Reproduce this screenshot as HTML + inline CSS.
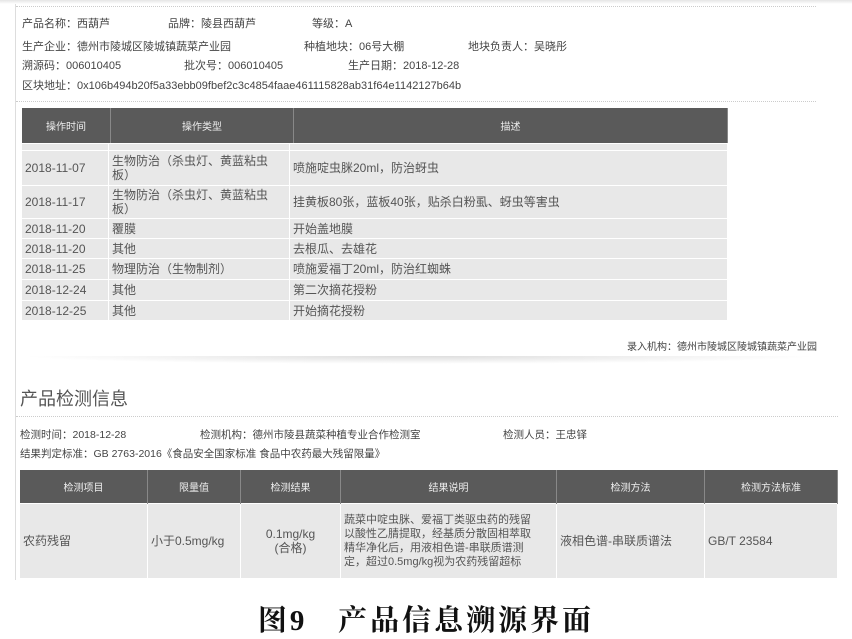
<!DOCTYPE html>
<html><head><meta charset="utf-8"><style>
body{margin:0;width:852px;height:638px;background:#fff;position:relative;overflow:hidden;font-family:"Liberation Sans","Noto Sans CJK SC",sans-serif;color:#444;}
.a{position:absolute;white-space:nowrap;font-size:11px;}
table{position:absolute;border-collapse:collapse;font-size:12px;color:#555;table-layout:fixed;}
th{background:#5a5a5a;color:#eee;font-weight:normal;border-right:1px solid #888;font-size:10px;}
td{background:#e8e8e8;border-right:1px solid #fff;border-top:1px solid #fff;padding:0 3px;line-height:14px;}
.dot{position:absolute;left:16px;border-top:1px dotted #ccc;}
</style></head><body>
<div style="position:absolute;left:0;top:0;width:852px;height:4px;background:linear-gradient(#e5e5e5,#fff)"></div>
<div style="position:absolute;left:15px;top:4px;width:1px;height:576px;background:#ddd"></div>
<div class="dot" style="top:6px;width:800px"></div>
<div class="a" style="left:22px;top:15px">产品名称：西葫芦</div>
<div class="a" style="left:168px;top:15px">品牌：陵县西葫芦</div>
<div class="a" style="left:312px;top:15px">等级：A</div>
<div class="a" style="left:22px;top:38px">生产企业：德州市陵城区陵城镇蔬菜产业园</div>
<div class="a" style="left:304px;top:38px">种植地块：06号大棚</div>
<div class="a" style="left:468px;top:38px">地块负责人：吴晓彤</div>
<div class="a" style="left:22px;top:57px">溯源码：006010405</div>
<div class="a" style="left:184px;top:57px">批次号：006010405</div>
<div class="a" style="left:348px;top:57px">生产日期：2018-12-28</div>
<div class="a" style="left:22px;top:77px">区块地址：0x106b494b20f5a33ebb09fbef2c3c4854faae461115828ab31f64e1142127b64b</div>
<div class="dot" style="top:101px;width:800px"></div>
<div style="position:absolute;left:22px;top:108px;width:706px;height:212px;overflow:hidden">
<table style="left:0;top:0;width:706px">
<tr style="height:35px"><th style="width:86px">操作时间</th><th style="width:180px">操作类型</th><th>描述</th></tr>
</table>
<table style="left:0;top:35px;width:706px">
<tr style="height:7px"><td style="width:80px"></td><td style="width:174px"></td><td></td></tr>
<tr style="height:35px"><td>2018-11-07</td><td>生物防治（杀虫灯、黄蓝粘虫板）</td><td>喷施啶虫脒20ml，防治蚜虫</td></tr>
<tr style="height:33px"><td>2018-11-17</td><td>生物防治（杀虫灯、黄蓝粘虫板）</td><td>挂黄板80张，蓝板40张，贴杀白粉虱、蚜虫等害虫</td></tr>
<tr style="height:20px"><td>2018-11-20</td><td>覆膜</td><td>开始盖地膜</td></tr>
<tr style="height:20px"><td>2018-11-20</td><td>其他</td><td>去根瓜、去雄花</td></tr>
<tr style="height:21px"><td>2018-11-25</td><td>物理防治（生物制剂）</td><td>喷施爱福丁20ml，防治红蜘蛛</td></tr>
<tr style="height:21px"><td>2018-12-24</td><td>其他</td><td>第二次摘花授粉</td></tr>
<tr style="height:20px"><td>2018-12-25</td><td>其他</td><td>开始摘花授粉</td></tr>
</table></div>
<div class="a" style="right:35px;top:338px;font-size:10px">录入机构：德州市陵城区陵城镇蔬菜产业园</div>
<div style="position:absolute;left:20px;top:356px;width:800px;height:8px;background:radial-gradient(ellipse at 50% 0,#ddd,#fff 70%)"></div>
<div class="a" style="left:20px;top:385px;font-size:18px;color:#555">产品检测信息</div>
<div class="dot" style="top:416px;width:822px"></div>
<div class="a" style="left:20px;top:427px;font-size:10.5px">检测时间：2018-12-28</div>
<div class="a" style="left:200px;top:427px;font-size:10.5px">检测机构：德州市陵县蔬菜种植专业合作检测室</div>
<div class="a" style="left:503px;top:427px;font-size:10.5px">检测人员：王忠铎</div>
<div class="a" style="left:20px;top:446px;font-size:10.5px">结果判定标准：GB 2763-2016《食品安全国家标准 食品中农药最大残留限量》</div>
<table style="left:20px;top:470px;width:818px">
<tr style="height:33px"><th style="width:125px">检测项目</th><th style="width:90px">限量值</th><th style="width:97px">检测结果</th><th style="width:213px">结果说明</th><th style="width:145px">检测方法</th><th>检测方法标准</th></tr>
<tr style="height:75px"><td>农药残留</td><td>小于0.5mg/kg</td><td style="text-align:center">0.1mg/kg<br>(合格)</td><td style="font-size:11px;white-space:normal;padding-right:16px">蔬菜中啶虫脒、爱福丁类驱虫药的残留以酸性乙腈提取，经基质分散固相萃取精华净化后，用液相色谱-串联质谱测定，超过0.5mg/kg视为农药残留超标</td><td>液相色谱-串联质谱法</td><td>GB/T 23584</td></tr>
</table>
<div class="a" style="left:0;width:852px;text-align:center;top:598px;font-size:29px;letter-spacing:3px;font-weight:bold;color:#111;font-family:'Liberation Serif','Noto Serif CJK SC',serif">图9&nbsp;&nbsp;&nbsp;产品信息溯源界面</div>
</body></html>
